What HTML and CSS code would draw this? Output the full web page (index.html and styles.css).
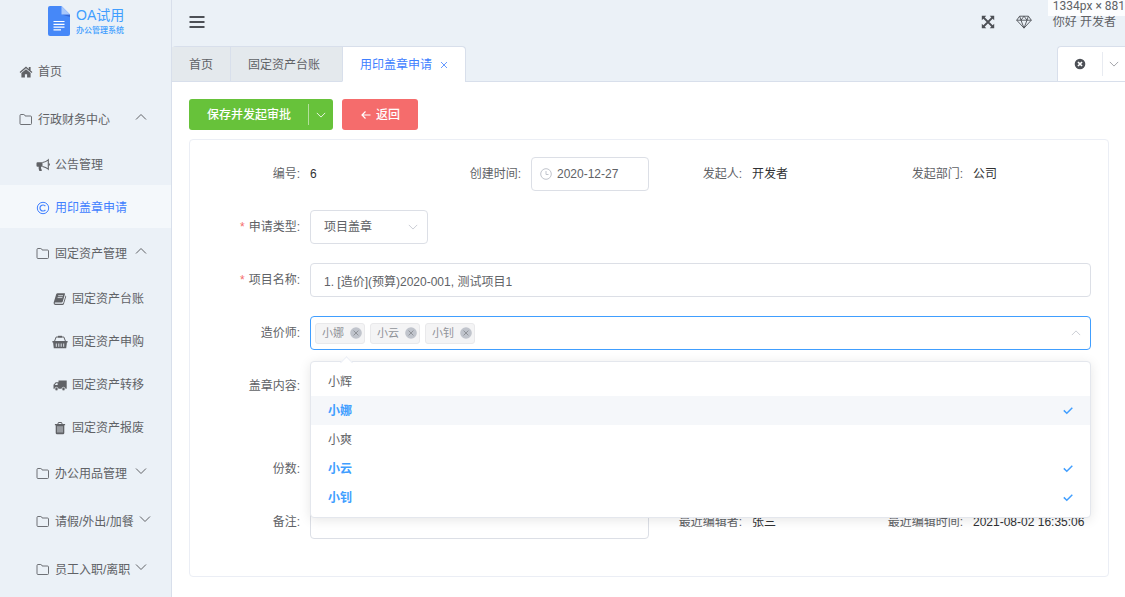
FILE: index.html
```html
<!DOCTYPE html>
<html lang="zh-CN">
<head>
<meta charset="utf-8">
<title>OA试用 - 用印盖章申请</title>
<link rel="stylesheet" href="styles.css">
</head>
<body>
<svg class="sprite" aria-hidden="true">
  <symbol id="i-folder" viewBox="0 0 14 14"><path d="M1 10.500V2.500Q1 1.500 2 1.500H4.700Q5.400 1.500 5.700 2.100L6.100 3H11.500Q12.500 3 12.500 4V10.500Q12.500 11.500 11.500 11.500H2Q1 11.500 1 10.500Z" fill="none" stroke="currentColor" stroke-width=".9"/></symbol>
  <symbol id="i-down" viewBox="0 0 12 12"><path d="M1 3.5 6 8.5 11 3.5" fill="none" stroke="currentColor"/></symbol>
  <symbol id="i-up" viewBox="0 0 12 12"><path d="M1 8.5 6 3.5 11 8.5" fill="none" stroke="currentColor"/></symbol>
  <symbol id="i-check" viewBox="0 0 12 12"><path d="M1.800 5.400 4.800 8.200 10.300 2.800" fill="none" stroke="currentColor" stroke-width="1.5"/></symbol>
  <symbol id="i-tagclose" viewBox="0 0 12 12"><circle cx="6" cy="6" r="5.8" fill="#c0c4cc"/><path d="M3.6 3.6 8.4 8.4M8.4 3.6 3.6 8.4" stroke="#909399"/></symbol>
</svg>
<div class="app">
  <aside class="sidebar">
    <div class="logo">
      <svg class="logo-mark" viewBox="0 0 22 30" aria-hidden="true"><path d="M2 0H13.500L22 8.500V28Q22 30 20 30H2Q0 30 0 28V2Q0 0 2 0Z" fill="#4688f8"/><path d="M13.500 8.500H22V11Z" fill="#3567d6"/><path d="M13.500 0 22 8.500H13.500Z" fill="#a9c8fb"/><path d="M5.500 15.500H16.500M5.500 18.300H16.500M5.500 21.100H16.500M5.500 23.900H13" stroke="#fff" stroke-width="1.200"/></svg>
      <div class="logo-text"><span class="logo-name">OA试用</span><span class="logo-sub">办公管理系统</span></div>
    </div>
    <nav class="menu">
      <a class="item top" href="#"><svg class="icon" viewBox="0 0 14 14"><path d="M7 1.500.6 7 1.400 8 7 3.200 12.600 8 13.400 7 11.600 5.400V2H9.800V3.900Z" fill="currentColor"/><path d="M7 4.200 2.400 8.100V12.500H5.900V9.300H8.100V12.500H11.600V8.100Z" fill="currentColor"/></svg><span>首页</span></a>
      <a class="item top group" href="#"><svg class="icon"><use href="#i-folder"/></svg><span>行政财务中心</span><svg class="arrow"><use href="#i-up"/></svg></a>
      <a class="item second" href="#"><svg class="icon" viewBox="0 0 14 14"><path d="M1.500 4.200H6.500V8.800H5Q4.700 10.600 6 12.400Q4.500 13.400 3.200 12.700Q2.300 10.500 2.700 8.800H1.500Q.5 8.800.5 7.800V5.200Q.5 4.200 1.500 4.200Z" fill="currentColor"/><path d="M6.500 4.500Q9.800 4 12.300 1.800V11.200Q9.800 9 6.500 8.500" fill="none" stroke="currentColor" stroke-width="1.100"/><path d="M13.300 5.500V7.500" stroke="currentColor" stroke-width="1.200"/></svg><span>公告管理</span></a>
      <a class="item second active" href="#" aria-current="page"><svg class="icon" viewBox="0 0 14 14"><circle cx="7" cy="7" r="5.700" fill="none" stroke="currentColor"/><path d="M9.400 5.200A3 3 0 1 0 9.400 8.800" fill="none" stroke="currentColor" stroke-width="1.200"/></svg><span>用印盖章申请</span></a>
      <a class="item second group" href="#"><svg class="icon"><use href="#i-folder"/></svg><span>固定资产管理</span><svg class="arrow"><use href="#i-up"/></svg></a>
      <a class="item third" href="#"><svg class="icon" viewBox="0 0 14 14"><path d="M4.500 1.200H11.400Q12.300 1.200 12 2.100L9.700 9.700Q9.400 10.500 8.600 10.500H2.300Q1.500 10.600 1.700 11.300Q1.900 11.700 2.500 11.700H9.500Q10.100 11.700 10.300 11L12.600 3.400Q13.400 3.800 13.100 4.700L11 11.700Q10.600 12.900 9.500 12.900H2.300Q.4 12.700.6 10.700L3.200 2.200Q3.600 1.200 4.500 1.200Z" fill="currentColor"/><path d="M5.200 3.700H10M4.600 5.600H9.400" stroke="#ebf1f7" stroke-width=".8"/></svg><span>固定资产台账</span></a>
      <a class="item third" href="#"><svg class="icon wide" viewBox="0 0 16 14"><path d="M.4 6H15.600V7.600H14.900L14.200 13.300H1.800L1.100 7.600H.4Z" fill="currentColor"/><path d="M4.300 8.500V11.800M6.800 8.500V11.800M9.200 8.500V11.800M11.700 8.500V11.800" stroke="#ebf1f7" stroke-width=".9"/><path d="M2.600 6 4.200 2H11.800L13.400 6" fill="none" stroke="currentColor"/><path d="M6 .8H10V2.500H6Z" fill="currentColor"/></svg><span>固定资产申购</span></a>
      <a class="item third" href="#"><svg class="icon" viewBox="0 0 14 14"><path d="M5.500 2.400H13.700V10.800H.5V6.800L2.700 4.300H5.500Z" fill="currentColor"/><path d="M1.700 7 3.200 5.200H4.600V7Z" fill="#ebf1f7"/><g fill="currentColor" stroke="#ebf1f7" stroke-width=".7"><circle cx="3.500" cy="11" r="1.700"/><circle cx="10.500" cy="11" r="1.700"/></g></svg><span>固定资产转移</span></a>
      <a class="item third" href="#"><svg class="icon" viewBox="0 0 14 14"><path d="M1.900 3H12.100V4.200H11.300V11.900Q11.300 13.200 10 13.200H4Q2.700 13.200 2.700 11.900V4.200H1.900Z" fill="currentColor"/><path d="M4.900 3 5.400 1.500H8.600L9.100 3" fill="none" stroke="currentColor"/><path d="M5 5.200V11.500M7 5.200V11.500M9 5.200V11.500" stroke="#ebf1f7" stroke-width=".8"/></svg><span>固定资产报废</span></a>
      <a class="item second group" href="#"><svg class="icon"><use href="#i-folder"/></svg><span>办公用品管理</span><svg class="arrow"><use href="#i-down"/></svg></a>
      <a class="item second group" href="#"><svg class="icon"><use href="#i-folder"/></svg><span>请假/外出/加餐</span><svg class="arrow"><use href="#i-down"/></svg></a>
      <a class="item second group" href="#"><svg class="icon"><use href="#i-folder"/></svg><span>员工入职/离职</span><svg class="arrow"><use href="#i-down"/></svg></a>
    </nav>
  </aside>
  <div class="page">
    <header class="header">
      <button class="icon-btn" type="button" aria-label="折叠菜单"><svg class="bars" viewBox="0 0 16 14"><path d="M.5 2H15.500M.5 7H15.500M.5 12H15.500" stroke="currentColor" stroke-width="2.200"/></svg></button>
      <div class="user-tools">
        <button class="icon-btn" type="button" aria-label="全屏"><svg class="expand" viewBox="0 0 14 14"><path d="M2.500 2.500 11.500 11.500M11.500 2.500 2.500 11.500" stroke="currentColor" stroke-width="1.800"/><path d="M.8.8H5.300L.8 5.300ZM13.200.8V5.300L8.700.8ZM.8 13.200V8.700L5.300 13.200ZM13.200 13.200H8.700L13.200 8.700Z" fill="currentColor"/></svg></button>
        <button class="icon-btn" type="button" aria-label="主题"><svg class="gem" viewBox="0 0 16 14"><path d="M3.600 1.200H12.400L15.300 5.200 8 13.100.7 5.200ZM.7 5.200H15.300M3.600 1.200 5 5.200 8 13.100 11 5.200 12.400 1.200M5 5.200 8 1.200 11 5.200" fill="none" stroke="currentColor" stroke-width=".9" stroke-linejoin="round"/></svg></button>
        <a class="user" href="#">你好 开发者</a>
      </div>
    </header>
    <div class="tabs-bar">
      <nav class="tabs">
        <a class="tab" href="#">首页</a>
        <a class="tab closable" href="#">固定资产台账</a>
        <a class="tab current" href="#" aria-current="page">用印盖章申请<svg class="tab-close" viewBox="0 0 8 8"><path d="M1 1 7 7M7 1 1 7" stroke="currentColor" stroke-width=".8"/></svg></a>
      </nav>
      <div class="tabs-tools">
        <button class="icon-btn close-all" type="button" aria-label="关闭标签"><svg viewBox="0 0 12 12"><circle cx="6" cy="6" r="5.300" fill="currentColor"/><path d="M4 4 8 8M8 4 4 8" stroke="#fff" stroke-width="1.700"/></svg></button>
        <button class="icon-btn more" type="button" aria-label="更多操作"><svg viewBox="0 0 12 12"><use href="#i-down"/></svg></button>
      </div>
    </div>
    <main class="content">
      <div class="actions">
        <div class="split">
          <button class="save" type="button">保存并发起审批</button>
          <button class="save-more" type="button" aria-label="更多保存方式"><svg viewBox="0 0 12 12"><use href="#i-down"/></svg></button>
        </div>
        <button class="back" type="button"><svg viewBox="0 0 10 10"><path d="M9.500 5H1M4.500 1.500 1 5 4.500 8.500" fill="none" stroke="currentColor" stroke-width="1.200"/></svg>返回</button>
      </div>
      <form class="card">
        <div class="field"><span class="label">编号:</span><span class="value">6</span></div>
        <div class="field"><label class="label" for="created">创建时间:</label>
          <div class="box date"><svg viewBox="0 0 12 12"><circle cx="6" cy="6" r="5.300" fill="none" stroke="currentColor"/><path d="M6 3V6.500H8.500" fill="none" stroke="currentColor"/></svg><input id="created" type="text" value="2020-12-27"></div></div>
        <div class="field"><span class="label">发起人:</span><span class="value">开发者</span></div>
        <div class="field"><span class="label">发起部门:</span><span class="value">公司</span></div>

        <div class="field first"><label class="label required" for="kind">申请类型:</label>
          <div class="box pick"><select id="kind"><option>项目盖章</option></select><svg viewBox="0 0 12 12"><use href="#i-down"/></svg></div></div>

        <div class="field full"><label class="label required" for="project">项目名称:</label>
          <input class="box" id="project" type="text" value="1. [造价](预算)2020-001, 测试项目1"></div>

        <div class="field full"><label class="label" for="cost">造价师:</label>
          <div class="multi">
            <div class="box focus">
              <span class="tag">小娜<button type="button" aria-label="移除小娜"><svg><use href="#i-tagclose"/></svg></button></span>
              <span class="tag">小云<button type="button" aria-label="移除小云"><svg><use href="#i-tagclose"/></svg></button></span>
              <span class="tag">小钊<button type="button" aria-label="移除小钊"><svg><use href="#i-tagclose"/></svg></button></span>
              <input id="cost" type="text" role="combobox" aria-expanded="true" aria-controls="cost-list">
              <svg class="caret" viewBox="0 0 12 12"><use href="#i-up"/></svg>
            </div>
            <ul class="dropdown" id="cost-list" role="listbox" aria-multiselectable="true">
              <li role="option" aria-selected="false">小辉</li>
              <li class="selected hover" role="option" aria-selected="true">小娜<svg><use href="#i-check"/></svg></li>
              <li role="option" aria-selected="false">小爽</li>
              <li class="selected" role="option" aria-selected="true">小云<svg><use href="#i-check"/></svg></li>
              <li class="selected" role="option" aria-selected="true">小钊<svg><use href="#i-check"/></svg></li>
            </ul>
          </div></div>

        <div class="field full"><label class="label" for="body">盖章内容:</label><textarea class="box tall" id="body"></textarea></div>
        <div class="field first"><label class="label" for="copies">份数:</label><input class="box" id="copies" type="text"></div>
        <div class="field half"><label class="label" for="note">备注:</label><textarea class="box" id="note"></textarea></div>
        <div class="field"><span class="label">最近编辑者:</span><span class="value">张三</span></div>
        <div class="field"><span class="label">最近编辑时间:</span><span class="value">2021-08-02 16:35:06</span></div>
      </form>
    </main>
  </div>
</div>
<div class="size-tip">1334px × 881</div>
</body>
</html>
```
FILE: styles.css
```css
* { box-sizing: border-box; }

body {
  margin: 0;
  background: #fff;
  color: #606266;
  font: 12px/18px "Liberation Sans", "Noto Sans CJK SC", sans-serif;
  overflow: hidden;
}

a { color: inherit; text-decoration: none; }
button, input, select, textarea { font: inherit; color: inherit; }
button { border: 0; background: none; padding: 0; cursor: pointer; }
svg { display: block; flex: none; width: 12px; height: 12px; }
.sprite { display: none; }

.app { display: flex; min-height: 100vh; }

/* Sidebar */
.sidebar {
  flex: none;
  width: 172px;
  background: #ebf1f7;
  border-right: 1px solid #d8dfeb;
}
.logo { display: flex; gap: 6px; height: 46px; padding: 6px 0 0 48px; }
.logo-mark { width: 22px; height: 30px; }
.logo-text { display: flex; flex-direction: column; color: #409eff; white-space: nowrap; }
.logo-name { font-size: 14px; line-height: 18px; }
.logo-sub { font-size: 8px; line-height: 14px; font-weight: 500; }

.item { display: flex; align-items: center; gap: 5px; height: 43px; padding: 3px 24px 0 36px; white-space: nowrap; }
.item.top, .item.group { height: 48px; }
.item.top { padding-left: 19px; }
.item.third { padding-left: 53px; }
.item .icon { width: 14px; height: 14px; }
.item .icon.wide { width: 16px; margin: 0 -1px; }
.item .arrow { margin: -6px 0 0 auto; }
.item.active { background: #f4f8fb; color: #4080ff; }

/* Header */
.page { flex: 1; min-width: 0; display: flex; flex-direction: column; }
.header {
  display: flex;
  justify-content: space-between;
  align-items: center;
  height: 46px;
  padding: 0 9px 2px 17px;
  background: #ebf1f7;
}
.icon-btn { display: grid; place-items: center; color: #4d5056; }
.bars { width: 16px; height: 14px; }
.expand { width: 14px; height: 14px; }
.gem { width: 16px; height: 14px; }
.user-tools { display: flex; align-items: center; gap: 21px; }

/* Tabs */
.tabs-bar {
  display: flex;
  justify-content: space-between;
  height: 36px;
  background: #ebf1f7;
  box-shadow: inset 0 -1px #d8dfeb;
}
.tabs { display: flex; border: 1px solid #d8dfeb; border-left: 0; border-bottom: 0; border-radius: 4px 4px 0 0; }
.tab {
  display: flex;
  align-items: center;
  padding: 1px 17px 0;
  background: #e4e9ed;
  border-bottom: 1px solid #d8dfeb;
}
.tab + .tab { border-left: 1px solid #d8dfeb; }
.tab.closable { padding-right: 22px; }
.tab.current { background: #fff; border-bottom-color: #fff; color: #4080ff; border-radius: 0 4px 0 0; }
.tab-close { width: 8px; height: 8px; margin-left: 8px; }
.tabs-tools {
  display: flex;
  align-items: center;
  background: #fff;
  border: 1px solid #d8dfeb;
  border-right: 0;
  border-radius: 4px 0 0 0;
}
.close-all { width: 44px; height: 24px; }
.more { width: 23px; height: 24px; border-left: 1px solid #e8ebf1; color: #909399; }
.more svg { width: 10px; height: 10px; }

/* Actions */
.content { padding: 17px 16px 20px 17px; }
.actions { display: flex; gap: 9px; margin-bottom: 9px; }
.split { display: flex; align-items: center; border-radius: 3px; background: #67c23a; color: #fff; }
.save { height: 31px; padding: 0 17px 0 18px; font-weight: 500; }
.save-more { display: grid; place-items: center; width: 25px; height: 21px; border-left: 1px solid #b3e09c; }
.save-more svg { width: 10px; height: 10px; }
.back {
  display: flex;
  align-items: center;
  gap: 5px;
  height: 31px;
  padding: 0 18px 0 19px;
  border-radius: 3px;
  background: #f56c6c;
  color: #fff;
  font-weight: 500;
}
.back svg { width: 10px; height: 10px; }

/* Form card */
.card {
  display: grid;
  grid-template-columns: repeat(4, minmax(0, 1fr));
  row-gap: 19px;
  padding: 17px 17px 37px;
  border: 1px solid #ebeef5;
  border-radius: 4px;
}
.field { display: flex; min-height: 34px; min-width: 0; }
.first { grid-column: 1; }
.half { grid-column: 1 / span 2; }
.full { grid-column: 1 / -1; }
.label { flex: none; width: 103px; padding-right: 10px; line-height: 35px; text-align: right; white-space: nowrap; }
.required::before { content: "*"; margin-right: 4px; color: #f56c6c; }
.value { line-height: 35px; color: #303133; white-space: nowrap; }
.label, .value { height: 34px; }
.box {
  flex: 1;
  width: 100%;
  min-width: 0;
  height: 34px;
  padding: 0 13px;
  border: 1px solid #dcdfe6;
  border-radius: 4px;
  background: #fff;
  outline: 0;
  resize: none;
}
.box.tall { height: 64px; }
.box input, .box select { flex: 1; min-width: 0; width: 100%; padding: 0; border: 0; outline: 0; background: none; appearance: none; }
.date, .pick, .focus { display: flex; align-items: center; }
.date { gap: 5px; padding: 0 8px; }
.date svg, .pick svg, .caret { color: #c0c4cc; }
.pick { padding-right: 9px; }
.pick svg, .caret { width: 10px; height: 10px; }
.multi { position: relative; flex: 1; min-width: 0; display: flex; }
.focus { gap: 5px; padding: 0 9px 0 4px; border-color: #409eff; }
.tag {
  display: flex;
  align-items: center;
  gap: 6px;
  height: 21px;
  padding: 0 2px 0 6px;
  border: 1px solid #e9e9eb;
  border-radius: 3px;
  background: #f4f4f5;
  color: #909399;
  font-size: 11px;
  white-space: nowrap;
}

.dropdown {
  position: absolute;
  top: 45px;
  left: 0;
  right: 0;
  z-index: 2;
  margin: 0;
  padding: 5px 0;
  border: 1px solid #e4e7ed;
  border-radius: 4px;
  background: #fff;
  box-shadow: 0 2px 12px rgba(0, 0, 0, .1);
  list-style: none;
}
.dropdown::before {
  content: "";
  position: absolute;
  top: -4px;
  left: 31px;
  width: 8px;
  height: 8px;
  border: solid #ebeef5;
  border-width: 1px 0 0 1px;
  background: #fff;
  transform: rotate(45deg);
}
.dropdown li { display: flex; align-items: center; justify-content: space-between; height: 29px; padding: 0 16px 0 17px; }
.dropdown .selected { color: #409eff; font-weight: 700; }
.dropdown .hover { background: #f5f7fa; }

/* Viewport size readout */
.size-tip {
  position: absolute;
  top: 0;
  right: 0;
  height: 16px;
  padding-left: 5px;
  background: rgba(255, 255, 255, .85);
  font: 12px/13px Roboto, sans-serif;
  white-space: nowrap;
}
```
